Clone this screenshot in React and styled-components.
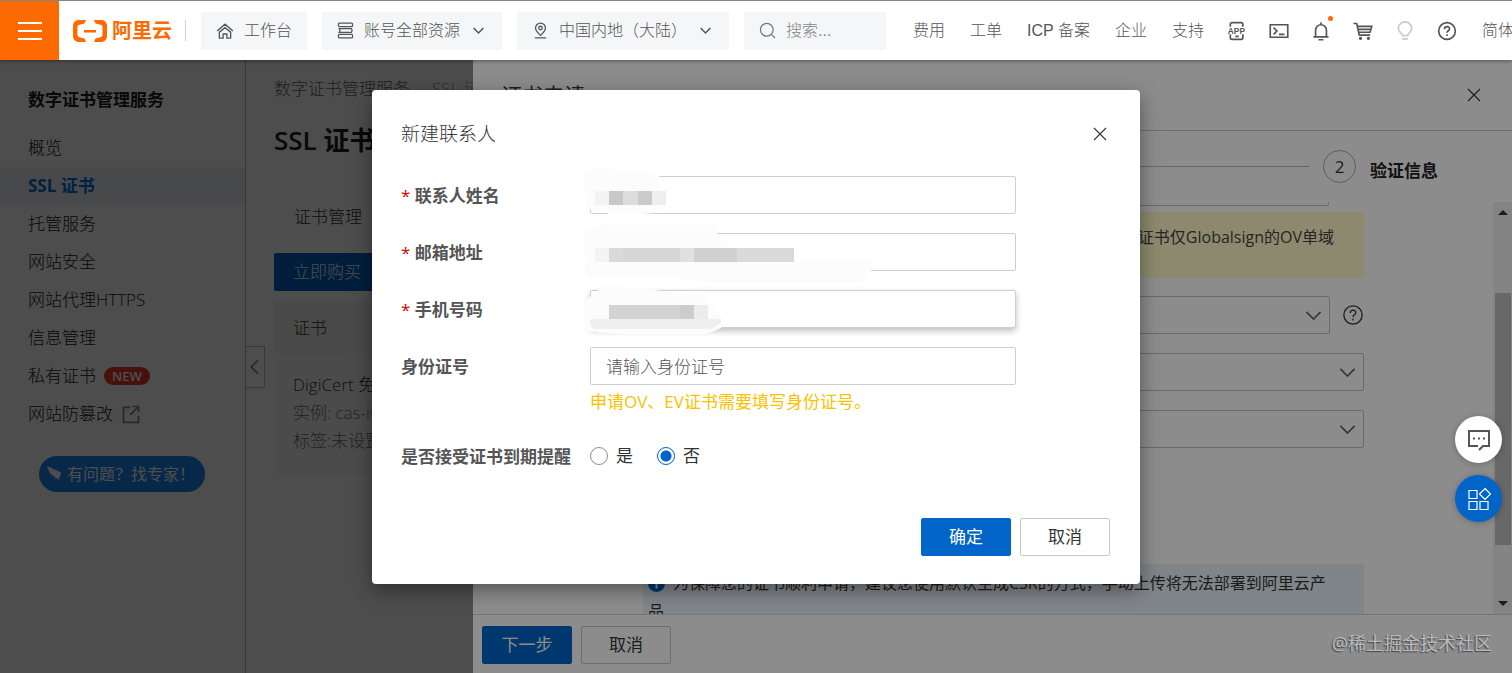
import React, { useState } from 'react';
import styled, { createGlobalStyle } from 'styled-components';

const GlobalStyle = createGlobalStyle`
  * {
    box-sizing: border-box;
  }
  body {
    margin: 0;
    font-family: 'Open Sans', 'Noto Sans CJK SC', sans-serif;
    font-size: 17px;
    line-height: 24px;
    color: #333;
  }
  button, input, select {
    font: inherit;
    color: inherit;
  }
`;

const Page = styled.div`
  display: flex;
  flex-direction: column;
  height: 100vh;
  overflow: hidden;
`;

/* ---------- top bar ---------- */
const TopBar = styled.header`
  position: relative;
  z-index: 5;
  display: flex;
  align-items: center;
  flex: none;
  height: 60px;
  border-top: 1px solid #858585;
  background: #fff;
  box-shadow: 0 1px 4px rgba(0, 0, 0, 0.4);
  font-family: 'Liberation Sans', 'Noto Sans CJK SC', sans-serif;
  font-size: 16px;
  font-weight: 300;
  color: #555;
  white-space: nowrap;
`;
const MenuButton = styled.button`
  flex: none;
  width: 59px;
  height: 59px;
  padding: 0;
  border: 0;
  background: #ff6a00;
  svg {
    display: block;
    margin: auto;
  }
`;
const Brand = styled.a`
  display: flex;
  align-items: center;
  gap: 4px;
  flex: none;
  margin-left: 13px;
  color: #ff6a00;
  font-size: 20px;
  font-weight: 700;
  text-decoration: none;
`;
const Divider = styled.span`
  flex: none;
  width: 1px;
  height: 21px;
  margin: 0 15px 0 13px;
  background: #d0d3d6;
`;
const Pills = styled.div`
  display: flex;
  gap: 15px;
  flex: none;
`;
const Pill = styled.button`
  display: flex;
  align-items: center;
  gap: 10px;
  height: 38px;
  padding: 0 15px;
  border: 0;
  background: #f4f6f7;
  font-family: inherit;
  svg + svg {
    margin: 0 2px;
  }
`;
const PillArrow = styled.span`
  display: flex;
  margin: 0 2px;
`;
const SearchBox = styled.label`
  display: flex;
  align-items: center;
  gap: 10px;
  width: 142px;
  height: 38px;
  padding: 0 15px;
  background: #f4f6f7;
  color: #777;
  input {
    width: 80px;
    padding: 0;
    border: 0;
    outline: none;
    background: transparent;
  }
  input::placeholder {
    color: #888;
    opacity: 1;
  }
`;
const Nav = styled.nav`
  display: flex;
  align-items: center;
  gap: 25px;
  flex: none;
  margin-left: 27px;
  a {
    color: inherit;
    text-decoration: none;
  }
`;
const Tools = styled.div`
  display: flex;
  align-items: center;
  gap: 20px;
  flex: none;
  margin: 0 24px 0 22px;
`;
const ToolButton = styled.button`
  position: relative;
  display: flex;
  align-items: center;
  justify-content: center;
  width: 22px;
  height: 22px;
  padding: 0;
  border: 0;
  background: none;
  color: ${({ $faint }) => ($faint ? '#c8ccd0' : '#555')};
`;
const Dot = styled.i`
  position: absolute;
  top: -4px;
  right: -1px;
  width: 5px;
  height: 5px;
  border-radius: 50%;
  background: #ff6a00;
`;
const Language = styled.a`
  color: inherit;
  text-decoration: none;
`;

/* ---------- console page ---------- */
const Body = styled.div`
  position: relative;
  display: flex;
  flex: 1;
  min-height: 0;
`;
const Sidebar = styled.aside`
  position: relative;
  flex: none;
  width: 246px;
  padding-top: 28px;
  border-right: 1px solid #c0c0c0;
  background: #fff;
`;
const SideTitle = styled.h2`
  margin: 0 0 17px;
  padding-left: 28px;
  font-size: 17px;
  font-weight: 700;
  line-height: 24px;
  color: #222;
`;
const SideItem = styled.a`
  display: flex;
  align-items: center;
  gap: 8px;
  height: 38px;
  padding-left: 28px;
  color: ${({ $active }) => ($active ? '#0070e0' : '#222')};
  background: ${({ $active }) => ($active ? '#eff5fa' : 'none')};
  font-weight: ${({ $active }) => ($active ? 700 : 300)};
  text-decoration: none;
`;
const NewTag = styled.span`
  padding: 0 8px;
  border-radius: 9px;
  background: #f03c28;
  color: #fff;
  font-size: 13px;
  font-weight: 600;
  line-height: 18px;
`;
const ExpertButton = styled.button`
  display: flex;
  align-items: center;
  gap: 6px;
  height: 36px;
  margin: 23px 0 0 39px;
  padding: 0 10px 0 8px;
  border: 0;
  border-radius: 18px;
  background: #1c86f5;
  color: #fff;
  font-size: 16px;
  white-space: nowrap;
`;
const CollapseButton = styled.button`
  position: absolute;
  top: 286px;
  left: 245px;
  display: flex;
  align-items: center;
  justify-content: center;
  width: 20px;
  height: 42px;
  padding: 0;
  border: 1px solid #c0c0c0;
  background: #fff;
  color: #777;
`;
const Main = styled.main`
  flex: 1;
  min-width: 0;
  padding: 17px 28px;
  background: #fff;
  font-weight: 300;
`;
const Crumbs = styled.div`
  display: flex;
  gap: 22px;
  color: #666;
  a {
    color: inherit;
    text-decoration: none;
  }
  a + a {
    color: #999;
  }
`;
const PageTitle = styled.h1`
  margin: 20px 0 0;
  font-size: 26px;
  font-weight: 600;
  line-height: 38px;
  color: #222;
`;
const Tab = styled.div`
  margin: 46px 0 24px;
  padding-left: 20px;
`;
const Listing = styled.div`
  margin-top: 10px;
  background: #fafafa;
`;
const ListingHead = styled.div`
  padding: 15px 19px 13px;
  background: #f2f5f8;
`;
const ListingRow = styled.div`
  padding: 18px 19px 20px;
  line-height: 28px;
  p {
    margin: 0;
    color: #777;
  }
  p:first-child {
    color: #333;
  }
`;
const Shade = styled.div`
  position: absolute;
  inset: 0;
  background: rgba(0, 0, 0, 0.45);
`;

/* ---------- shared controls ---------- */
const Button = styled.button`
  height: 38px;
  min-width: 90px;
  padding: 0 18px;
  border: 1px solid ${({ $primary }) => ($primary ? '#0064c8' : '#c6c8cc')};
  border-radius: 2px;
  background: ${({ $primary }) => ($primary ? '#0064c8' : 'transparent')};
  color: ${({ $primary }) => ($primary ? '#fff' : '#333')};
  white-space: nowrap;
`;
const CloseButton = styled.button`
  display: flex;
  align-items: center;
  justify-content: center;
  width: 20px;
  height: 20px;
  padding: 0;
  border: 0;
  background: none;
`;

/* ---------- drawer ---------- */
const Drawer = styled.section`
  position: absolute;
  top: 0;
  right: 0;
  bottom: 0;
  display: flex;
  flex-direction: column;
  width: 1039px;
  max-width: 100%;
  background: #fff;
`;
const DrawerHead = styled.div`
  display: flex;
  align-items: center;
  justify-content: space-between;
  flex: none;
  height: 71px;
  padding: 0 28px;
  border-bottom: 1px solid #c8c8c8;
  h2 {
    margin: 0;
    font-size: 21px;
    font-weight: 400;
  }
`;
const Steps = styled.div`
  display: flex;
  align-items: center;
  flex: none;
  gap: 14px;
  height: 71px;
  padding: 0 74px 0 170px;
`;
const StepLine = styled.span`
  flex: 1;
  height: 1px;
  background: #bbb;
`;
const StepNumber = styled.span`
  display: flex;
  align-items: center;
  justify-content: center;
  width: 33px;
  height: 33px;
  border: 1px solid #aaa;
  border-radius: 50%;
`;
const StepName = styled.b`
  padding-top: 8px;
  color: #222;
`;
const ScrollArea = styled.div`
  display: flex;
  flex: 1;
  min-height: 0;
  overflow: hidden;
`;
/* the form is scrolled up so that only the edge of its first box is left */
const DrawerForm = styled.div`
  flex: 1;
  min-width: 0;
  margin-top: -34px;
  padding: 0 129px 0 170px;
`;
const SelectRow = styled.div`
  display: flex;
  align-items: center;
  gap: 12px;
  margin-bottom: ${({ $tight }) => ($tight ? 6 : 19)}px;
  padding-right: ${({ $short }) => ($short ? 35 : 0)}px;
`;
const SelectWrap = styled.span`
  position: relative;
  flex: 1;
  color: #666;
  svg {
    position: absolute;
    top: 10px;
    right: 7px;
    pointer-events: none;
  }
`;
const Select = styled.select`
  display: block;
  width: 100%;
  height: 38px;
  border: 1px solid #bfc2c6;
  border-radius: 2px;
  background: transparent;
  appearance: none;
`;
const Notice = styled.p`
  height: 66px;
  margin: 0 0 18px;
  padding: 13px 30px;
  background: #fffac8;
  font-size: 16px;
  text-align: right;
  white-space: nowrap;
  color: #444;
`;
const Info = styled.p`
  margin: 116px 0 0;
  padding: 5px 30px 5px 5px;
  background: #e9f2f9;
  font-size: 16px;
  line-height: 28px;
  svg {
    margin-right: 8px;
    vertical-align: -3px;
  }
`;
const ScrollBar = styled.div`
  display: flex;
  flex-direction: column;
  align-items: center;
  flex: none;
  width: 19px;
  padding: 8px 0;
  background: #f1f1f1;
`;
const Arrow = styled.i`
  border: 5px solid transparent;
  border-top-width: ${({ $up }) => ($up ? 0 : 5)}px;
  border-bottom-width: ${({ $up }) => ($up ? 5 : 0)}px;
  border-top-color: #333;
  border-bottom-color: #333;
`;
const Track = styled.div`
  display: grid;
  grid-template-rows: 78fr 251fr 56fr;
  flex: 1;
  width: 16px;
`;
const Thumb = styled.span`
  grid-row: 2;
  background: #bdbdbd;
`;
const DrawerFoot = styled.div`
  display: flex;
  gap: 9px;
  flex: none;
  height: 59px;
  padding: 11px 9px;
  border-top: 1px solid #d8d8d8;
`;

/* ---------- dialog ---------- */
const DialogLayer = styled.div`
  position: absolute;
  inset: 0;
  display: flex;
  align-items: flex-start;
  justify-content: center;
  padding-top: 30px;
`;
const Dialog = styled.form`
  width: 768px;
  max-width: 100%;
  padding: 32px 30px 28px 29px;
  border-radius: 4px;
  background: #fff;
  box-shadow: 0 6px 20px rgba(0, 0, 0, 0.4);
`;
const DialogHead = styled.div`
  display: flex;
  align-items: center;
  justify-content: space-between;
  margin-bottom: 30px;
  h2 {
    margin: 0;
    font-size: 19px;
    font-weight: 300;
  }
`;
const Field = styled.div`
  display: grid;
  grid-template-columns: 189px 426px;
  align-items: center;
  margin-bottom: 19px;
`;
const Label = styled.label`
  padding-top: 2px;
  font-weight: 700;
  color: #555;
  &::before {
    content: ${({ $required }) => ($required ? "'* '" : 'none')};
    font-weight: 400;
    color: #d00;
  }
`;
const InputWrap = styled.div`
  position: relative;
`;
const Input = styled.input`
  display: block;
  width: 100%;
  height: 38px;
  padding: 0 15px;
  border: 1px solid #cdcfd3;
  border-radius: 2px;
  outline: none;
  background: #fff;
  box-shadow: ${({ $raised }) =>
    $raised ? '0 3px 6px rgba(0, 0, 0, 0.25)' : 'none'};
  &::placeholder {
    color: #555;
    font-weight: 300;
    opacity: 1;
  }
`;
const Mosaic = styled.svg`
  position: absolute;
  top: -10px;
  left: -10px;
  z-index: 1;
  pointer-events: none;
`;
const Hint = styled.p`
  margin: -14px 0 29px 189px;
  color: #f8c200;
`;
const Radios = styled.div`
  display: flex;
  gap: 24px;
  label {
    display: flex;
    align-items: center;
    gap: 8px;
  }
`;
const Radio = styled.input`
  width: 18px;
  height: 18px;
  margin: 0;
  border: 1px solid #888d94;
  border-radius: 50%;
  background: #fff;
  appearance: none;
  &:checked {
    border-color: #0064c8;
    background: radial-gradient(#0064c8 5px, #fff 6px);
  }
`;
const DialogFoot = styled.div`
  display: flex;
  justify-content: flex-end;
  gap: 9px;
  margin-top: 49px;
`;

const Floats = styled.div`
  position: absolute;
  right: 10px;
  bottom: 151px;
  display: grid;
  gap: 12px;
`;
const FloatButton = styled.button`
  display: flex;
  align-items: center;
  justify-content: center;
  width: 47px;
  height: 47px;
  padding: 0;
  border: 0;
  border-radius: 50%;
  background: ${({ $blue }) => ($blue ? '#0064c8' : '#fff')};
  color: ${({ $blue }) => ($blue ? '#fff' : '#555')};
  box-shadow: 0 1px 6px rgba(0, 0, 0, 0.25);
`;
const Watermark = styled.span`
  position: absolute;
  right: 20px;
  bottom: 18px;
  font-size: 18px;
  color: #b9b9b9;
  text-shadow: -1px 1px 1px #444;
`;

/* ---------- icons ---------- */
const Icon = ({ size = 20, w = 2, box = 24, children }) => (
  <svg
    width={size}
    height={size}
    viewBox={`0 0 ${box} ${box}`}
    fill="none"
    stroke="currentColor"
    strokeWidth={w}
    aria-hidden="true"
  >
    {children}
  </svg>
);
const Chevron = ({ size = 16, w = 2 }) => (
  <Icon size={size} w={w}>
    <path d="M3 7.500l9 9 9-9" />
  </Icon>
);
const Cross = () => (
  <Icon size={14} w={1.1} box={14}>
    <path d="M1 1l12 12M13 1L1 13" />
  </Icon>
);
const Question = ({ size, w }) => (
  <Icon size={size} w={w}>
    <circle cx="12" cy="12" r="10" />
    <path d="M9 9.800c0-4 6-4 6-.3 0 2.200-3 2.200-3 4.700M12 15.800v2.200" />
  </Icon>
);
const LogoMark = () => (
  <svg width="36" height="24" viewBox="0 0 36 24" aria-hidden="true">
    <g fill="#ff6a00">
      <path d="M14 1H7C3.500 1 1 3.500 1 7v10c0 3.500 2.500 6 6 6h7l-1.500-3.500-5-1.300C6 17.800 5.500 17 5.500 16V8c0-1 .5-1.800 2-2.200l5-1.300z" />
      <path d="M22 1h7c3.500 0 6 2.500 6 6v10c0 3.500-2.500 6-6 6h-7l1.500-3.500 5-1.300c1.500-.4 2-1.200 2-2.200V8c0-1-.5-1.800-2-2.200l-5-1.300z" />
      <path d="M12 11h12v2.500H12z" />
    </g>
  </svg>
);

const sideItems = [
  { name: '概览' },
  { name: 'SSL 证书', active: true },
  { name: '托管服务' },
  { name: '网站安全' },
  { name: '网站代理HTTPS' },
  { name: '信息管理' },
  { name: '私有证书', isNew: true },
  { name: '网站防篡改', external: true },
];

// blurred-out personal data: soft patches first, then the grey cells [x, width, colour]
const mosaics = {
  name: {
    patches: ['M3 8l12-8 40 6 24 2v14l6 6-6 18-14 2H28l-2-3-20-2z'],
    cells: [[15, 14, '#f4f4f4'], [29, 14, '#c8c8c8'], [43, 15, '#dcdcdc'], [58, 14, '#cacaca'], [72, 14, '#eeeeee']],
  },
  email: {
    patches: ['M3 8l20-6h114v10l30 26h125v8l-12 14H130l-30-5H6z'],
    cells: [[15, 14, '#f4f4f4'], [29, 14, '#dadada'], [43, 57, '#d6d6d6'], [100, 14, '#e0e0e0'], [114, 43, '#d0d0d0'], [157, 57, '#dadada']],
  },
  phone: {
    patches: ['M6 20l18-14h18l80 10 19 22v10l-14 6H40l-36-3z', 'M10 39h131v4l-10 6H14l-4-5z'],
    cells: [[29, 71, '#d3d3d3'], [100, 14, '#cccccc'], [114, 14, '#ececec']],
  },
};

const Censored = ({ kind }) => (
  <Mosaic width="300" height="60" aria-hidden="true">
    {mosaics[kind].patches.map((d, i) => (
      <path key={d} d={d} fill={i ? '#efefef' : '#fcfcfc'} />
    ))}
    {mosaics[kind].cells.map(([x, width, fill]) => (
      <rect key={x} x={x} y="25" width={width} height="14" fill={fill} />
    ))}
  </Mosaic>
);

const Header = () => (
  <TopBar>
    <MenuButton aria-label="菜单">
      <svg width="24" height="20" stroke="#fff" strokeWidth="2">
        <path d="M0 2h24M0 10h24M0 18h24" />
      </svg>
    </MenuButton>
    <Brand href="#">
      <LogoMark />
      阿里云
    </Brand>
    <Divider />
    <Pills>
      <Pill>
        <Icon size={18} w={1.8}>
          <path d="M1.500 12L12 3l10.500 9M4.500 13.500v8h5v-5.500h5v5.500h5v-8L12 7.500z" />
        </Icon>
        工作台
      </Pill>
      <Pill>
        <Icon size={17} w={1.8}>
          <rect x="2" y="1.500" width="20" height="5" rx="1.500" />
          <path d="M2 9.500h19M2 14.500h19M21 9.500v5M4 9.500v5" />
          <rect x="2" y="17.500" width="20" height="5" rx="1.500" />
        </Icon>
        账号全部资源
        <PillArrow>
          <Chevron size={13} w={2.8} />
        </PillArrow>
      </Pill>
      <Pill>
        <Icon size={17} w={1.8}>
          <path d="M12 19c-4-4-7-6.500-7-10.500a7 7 0 0114 0C19 12.500 16 15 12 19zM4 22.500h16" />
          <circle cx="12" cy="8.500" r="2.500" />
        </Icon>
        中国内地（大陆）
        <PillArrow>
          <Chevron size={13} w={2.8} />
        </PillArrow>
      </Pill>
      <SearchBox>
        <Icon size={17} w={1.8}>
          <circle cx="11" cy="11" r="9" />
          <path d="M17.500 17.500l5 5" />
        </Icon>
        <input placeholder="搜索..." aria-label="搜索" />
      </SearchBox>
    </Pills>
    <Nav>
      <a href="#">费用</a>
      <a href="#">工单</a>
      <a href="#">ICP 备案</a>
      <a href="#">企业</a>
      <a href="#">支持</a>
    </Nav>
    <Tools>
      <ToolButton aria-label="APP">
        <Icon>
          <path d="M4 7V4q0-2 2-2h11q2 0 2 2v3M4 16v4q0 2 2 2h11q2 0 2-2v-4M10 18.500h4" />
          <text x="1" y="15" fontSize="10" fontWeight="700" fill="currentColor" stroke="none" fontFamily="Liberation Sans">
            APP
          </text>
        </Icon>
      </ToolButton>
      <ToolButton aria-label="Cloud Shell">
        <Icon>
          <path d="M1.500 4.500h21v15h-21zM5.500 8l4 4-4 4M12 16h6.500" />
        </Icon>
      </ToolButton>
      <ToolButton aria-label="消息">
        <Icon>
          <path d="M3 19h18M5.500 19v-8a6.500 6.500 0 0113 0v8M12 4.500V1.500M9 22.500h6" />
        </Icon>
        <Dot />
      </ToolButton>
      <ToolButton aria-label="购物车">
        <Icon>
          <path d="M.5 3h4l3 14h13M5.500 6.500h17l-2 7H7M6.300 10h15" />
          <circle cx="9" cy="20.800" r="1" />
          <circle cx="18.500" cy="20.800" r="1" />
        </Icon>
      </ToolButton>
      <ToolButton $faint aria-label="提示">
        <Icon>
          <path d="M9 17.500c0-2.500-5-4-5-8.500a8 8 0 0116 0c0 4.500-5 6-5 8.500zM8.500 21.500h7" />
        </Icon>
      </ToolButton>
      <ToolButton aria-label="帮助">
        <Question size={20} w={2} />
      </ToolButton>
    </Tools>
    <Language href="#">简体</Language>
  </TopBar>
);

const ConsolePage = () => (
  <>
    <Sidebar>
      <SideTitle>数字证书管理服务</SideTitle>
      {sideItems.map((item) => (
        <SideItem key={item.name} href="#" $active={item.active}>
          {item.name}
          {item.isNew && <NewTag>NEW</NewTag>}
          {item.external && (
            <Icon size={20} w={2}>
              <path d="M11 4H3v18h18v-8M14 3h7v7M21 3L11 13" stroke="#888" />
            </Icon>
          )}
        </SideItem>
      ))}
      <ExpertButton>
        <svg width="14" height="18" viewBox="0 0 14 18" fill="#fff" aria-hidden="true">
          <path d="M0 1l13 6c1 .5 1 1 .8 2L11 17l.2-4-3 1 .5-1.800C4 10.500 2 7 0 1z" />
        </svg>
        有问题？找专家！
      </ExpertButton>
      <CollapseButton aria-label="收起">
        <Icon size={18} w={2}>
          <path d="M16 3l-9 9 9 9" />
        </Icon>
      </CollapseButton>
    </Sidebar>
    <Main>
      <Crumbs>
        <a href="#">数字证书管理服务</a>
        <a href="#">SSL 证书</a>
      </Crumbs>
      <PageTitle>SSL 证书</PageTitle>
      <Tab>证书管理</Tab>
      <Button $primary>立即购买</Button>
      <Listing>
        <ListingHead>证书</ListingHead>
        <ListingRow>
          <p>DigiCert 免费</p>
          <p>实例: cas-iv</p>
          <p>标签:未设置</p>
        </ListingRow>
      </Listing>
    </Main>
  </>
);

const DrawerSelect = ({ label }) => (
  <SelectWrap>
    <Select aria-label={label} />
    <Chevron size={19} w={2.2} />
  </SelectWrap>
);

const ApplyDrawer = () => (
  <Drawer>
    <DrawerHead>
      <h2>证书申请</h2>
      <CloseButton aria-label="关闭">
        <Cross />
      </CloseButton>
    </DrawerHead>
    <Steps>
      <StepLine />
      <StepNumber>2</StepNumber>
      <StepName>验证信息</StepName>
    </Steps>
    <ScrollArea>
      <DrawerForm>
        <SelectRow $short $tight>
          <DrawerSelect label="域名" />
        </SelectRow>
        <Notice>证书仅Globalsign的OV单域</Notice>
        <SelectRow>
          <DrawerSelect label="联系人" />
          <Question size={22} w={1.4} />
        </SelectRow>
        <SelectRow>
          <DrawerSelect label="公司" />
        </SelectRow>
        <SelectRow>
          <DrawerSelect label="所在地" />
        </SelectRow>
        <Info>
          <svg width="17" height="17" viewBox="0 0 17 17" aria-hidden="true">
            <circle cx="8.500" cy="8.500" r="8.500" fill="#0064c8" />
            <path d="M8.500 4v2M8.500 7.500v6" stroke="#fff" strokeWidth="2" />
          </svg>
          为保障您的证书顺利申请，建议您使用默认生成CSR的方式，手动上传将无法部署到阿里云产品
        </Info>
      </DrawerForm>
      <ScrollBar>
        <Arrow $up />
        <Track>
          <Thumb />
        </Track>
        <Arrow />
      </ScrollBar>
    </ScrollArea>
    <DrawerFoot>
      <Button $primary>下一步</Button>
      <Button>取消</Button>
    </DrawerFoot>
  </Drawer>
);

const ContactDialog = () => {
  const [remind, setRemind] = useState('no');
  return (
    <DialogLayer>
      <Dialog onSubmit={(e) => e.preventDefault()}>
        <DialogHead>
          <h2>新建联系人</h2>
          <CloseButton type="button" aria-label="关闭">
            <Cross />
          </CloseButton>
        </DialogHead>
        <Field>
          <Label htmlFor="name" $required>联系人姓名</Label>
          <InputWrap>
            <Input id="name" />
            <Censored kind="name" />
          </InputWrap>
        </Field>
        <Field>
          <Label htmlFor="email" $required>邮箱地址</Label>
          <InputWrap>
            <Input id="email" />
            <Censored kind="email" />
          </InputWrap>
        </Field>
        <Field>
          <Label htmlFor="phone" $required>手机号码</Label>
          <InputWrap>
            <Input id="phone" $raised />
            <Censored kind="phone" />
          </InputWrap>
        </Field>
        <Field>
          <Label htmlFor="idcard">身份证号</Label>
          <Input id="idcard" placeholder="请输入身份证号" />
        </Field>
        <Hint>申请OV、EV证书需要填写身份证号。</Hint>
        <Field>
          <Label as="span" id="remind">是否接受证书到期提醒</Label>
          <Radios role="radiogroup" aria-labelledby="remind">
            <label>
              <Radio
                type="radio"
                name="remind"
                checked={remind === 'yes'}
                onChange={() => setRemind('yes')}
              />
              是
            </label>
            <label>
              <Radio
                type="radio"
                name="remind"
                checked={remind === 'no'}
                onChange={() => setRemind('no')}
              />
              否
            </label>
          </Radios>
        </Field>
        <DialogFoot>
          <Button $primary>确定</Button>
          <Button type="button">取消</Button>
        </DialogFoot>
      </Dialog>
    </DialogLayer>
  );
};

export default function App() {
  return (
    <Page>
      <GlobalStyle />
      <Header />
      <Body>
        <ConsolePage />
        <Shade />
        <ApplyDrawer />
        <Shade />
        <ContactDialog />
        <Floats>
          <FloatButton aria-label="咨询">
            <Icon size={24} w={2}>
              <path d="M11 18H2V3h20v15h-6l-4 4" />
              <path d="M6 10.500h2M11 10.500h2M16 10.500h2" />
            </Icon>
          </FloatButton>
          <FloatButton $blue aria-label="应用">
            <Icon size={24} w={1.2}>
              <path d="M2 3.500h8v8H2zM2 14.500h8v8H2zM13 14.500h8v8h-8zM18 1.500l5.500 5.500-5.500 5.500L12.500 7z" />
            </Icon>
          </FloatButton>
        </Floats>
        <Watermark>@稀土掘金技术社区</Watermark>
      </Body>
    </Page>
  );
}
